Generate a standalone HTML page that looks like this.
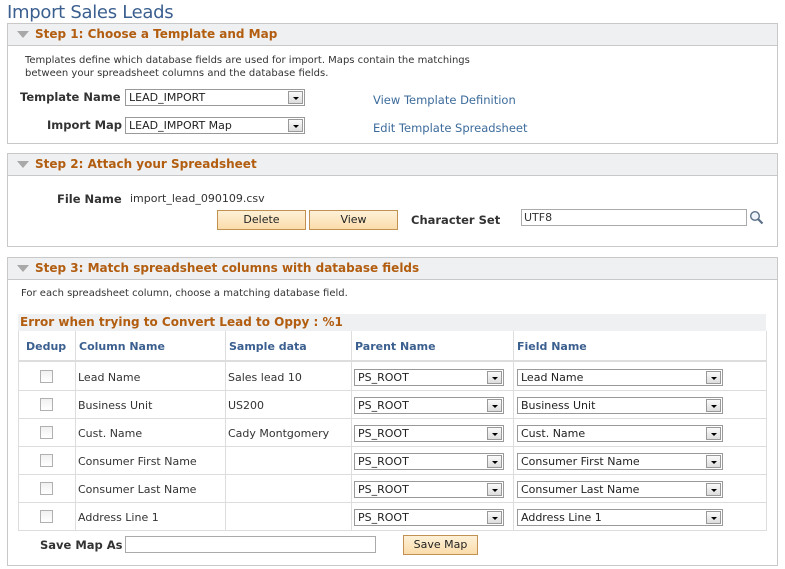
<!DOCTYPE html>
<html><head><meta charset="utf-8"><style>
*{box-sizing:border-box;margin:0;padding:0}
body{width:785px;height:569px;background:#fff;font-family:"DejaVu Sans","Liberation Sans",sans-serif;font-size:11px;color:#333;position:relative;overflow:hidden}
.a{position:absolute;white-space:nowrap}
.title{left:7px;top:2px;font-size:18px;color:#3b5f8f;font-family:"DejaVu Sans",sans-serif;letter-spacing:-0.3px}
.box{position:absolute;left:7px;width:771px;border:1px solid #c8c8c8}
.hd{height:22px;background:#eef0f2;border-bottom:1px solid #c8c8c8;position:relative}
.hd span{position:absolute;left:27px;top:3px;font-weight:bold;font-size:12px;color:#b25d0f}
.hd i{position:absolute;left:9px;top:7px;width:0;height:0;border-left:6px solid transparent;border-right:6px solid transparent;border-top:7px solid #a8a8a8}
.lbl{font-weight:bold;color:#333;font-size:11.5px}
.sel{position:absolute;height:17px;border:1px solid #999;background:#fff;font-size:11px;padding:1px 3px;color:#222}
.sel b{position:absolute;right:1px;top:1px;width:15px;height:13px;background:linear-gradient(#fafafa,#ddd);border:1px solid #999}
.sel b:after{content:"";position:absolute;left:4px;top:5px;border-left:3px solid transparent;border-right:3px solid transparent;border-top:3px solid #000}
.lnk{color:#3c6b9b;font-size:11.5px}
.btn{position:absolute;height:20px;background:linear-gradient(#fdf1d8,#fbdcaa);border:1px solid #c19152;text-align:center;line-height:18px;font-size:11px;color:#222}
.inp{position:absolute;height:17px;border:1px solid #aaa;background:#fff;padding:1px 2px;font-size:11px}
.vl{position:absolute;width:1px;background:#ddd}
.hl{position:absolute;height:1px;background:#ddd}
.cb{position:absolute;width:13px;height:13px;border:1px solid #b0b0b0;background:linear-gradient(#f0f0f0,#fff)}
.th{color:#3b5f8f;font-weight:bold;font-size:11px;top:340px}
.r{top:1px}
</style></head><body>
<div class="a title">Import Sales Leads</div>

<div class="box" style="top:23px;height:121px">
<div class="hd"><i></i><span>Step 1: Choose a Template and Map</span></div>
</div>
<div class="a" style="left:25px;top:54px;font-size:10px;line-height:13px">Templates define which database fields are used for import. Maps contain the matchings<br>between your spreadsheet columns and the database fields.</div>
<div class="a lbl" style="left:20px;top:90px">Template Name</div>
<div class="sel" style="left:125px;top:89px;width:180px">LEAD_IMPORT<b></b></div>
<div class="a lnk" style="left:373px;top:93px">View Template Definition</div>
<div class="a lbl" style="left:47px;top:118px">Import Map</div>
<div class="sel" style="left:125px;top:117px;width:180px">LEAD_IMPORT Map<b></b></div>
<div class="a lnk" style="left:373px;top:121px">Edit Template Spreadsheet</div>

<div class="box" style="top:153px;height:94px">
<div class="hd"><i></i><span>Step 2: Attach your Spreadsheet</span></div>
</div>
<div class="a lbl" style="left:57px;top:192px">File Name</div>
<div class="a" style="left:130px;top:192px">import_lead_090109.csv</div>
<div class="btn" style="left:217px;top:210px;width:89px">Delete</div>
<div class="btn" style="left:309px;top:210px;width:89px">View</div>
<div class="a lbl" style="left:411px;top:213px">Character Set</div>
<div class="inp" style="left:521px;top:209px;width:226px">UTF8</div>
<svg class="a" style="left:749px;top:210px" width="15" height="15" viewBox="0 0 15 15"><circle cx="6" cy="6" r="4.3" fill="#eef4fa" stroke="#5a6f86" stroke-width="1.4"/><line x1="9" y1="9" x2="13.5" y2="13.5" stroke="#5a6f86" stroke-width="2.2"/></svg>

<div class="box" style="top:257px;height:309px">
<div class="hd"><i></i><span>Step 3: Match spreadsheet columns with database fields</span></div>
</div>
<div class="a" style="left:21px;top:288px;font-size:10px">For each spreadsheet column, choose a matching database field.</div>

<div class="a" style="left:18px;top:314px;width:748px;height:17px;background:#eef0f2"></div>
<div class="a" style="left:20px;top:315px;font-weight:bold;font-size:12px;color:#b25d0f">Error when trying to Convert Lead to Oppy : %1</div>
<div class="hl" style="left:18px;top:360px;width:748px;height:2px"></div>
<div class="hl" style="left:18px;top:530px;width:748px"></div>
<div class="vl" style="left:18px;top:331px;height:200px"></div>
<div class="vl" style="left:75px;top:331px;height:200px"></div>
<div class="vl" style="left:225px;top:331px;height:200px"></div>
<div class="vl" style="left:351px;top:331px;height:200px"></div>
<div class="vl" style="left:513px;top:331px;height:200px"></div>
<div class="vl" style="left:766px;top:331px;height:200px"></div>
<div class="hl" style="left:18px;top:390px;width:748px"></div>
<div class="hl" style="left:18px;top:418px;width:748px"></div>
<div class="hl" style="left:18px;top:446px;width:748px"></div>
<div class="hl" style="left:18px;top:474px;width:748px"></div>
<div class="hl" style="left:18px;top:502px;width:748px"></div>
<div class="a th" style="left:26px">Dedup</div>
<div class="a th" style="left:79px">Column Name</div>
<div class="a th" style="left:229px">Sample data</div>
<div class="a th" style="left:355px">Parent Name</div>
<div class="a th" style="left:517px">Field Name</div>

<div class="cb" style="left:40px;top:370px"></div><div class="a" style="left:78px;top:371px">Lead Name</div><div class="a" style="left:228px;top:371px">Sales lead 10</div>
<div class="sel" style="left:354px;top:369px;width:150px">PS_ROOT<b></b></div><div class="sel" style="left:517px;top:369px;width:206px">Lead Name<b></b></div>
<div class="cb" style="left:40px;top:398px"></div><div class="a" style="left:78px;top:399px">Business Unit</div><div class="a" style="left:228px;top:399px">US200</div>
<div class="sel" style="left:354px;top:397px;width:150px">PS_ROOT<b></b></div><div class="sel" style="left:517px;top:397px;width:206px">Business Unit<b></b></div>
<div class="cb" style="left:40px;top:426px"></div><div class="a" style="left:78px;top:427px">Cust. Name</div><div class="a" style="left:228px;top:427px">Cady Montgomery</div>
<div class="sel" style="left:354px;top:425px;width:150px">PS_ROOT<b></b></div><div class="sel" style="left:517px;top:425px;width:206px">Cust. Name<b></b></div>
<div class="cb" style="left:40px;top:454px"></div><div class="a" style="left:78px;top:455px">Consumer First Name</div>
<div class="sel" style="left:354px;top:453px;width:150px">PS_ROOT<b></b></div><div class="sel" style="left:517px;top:453px;width:206px">Consumer First Name<b></b></div>
<div class="cb" style="left:40px;top:482px"></div><div class="a" style="left:78px;top:483px">Consumer Last Name</div>
<div class="sel" style="left:354px;top:481px;width:150px">PS_ROOT<b></b></div><div class="sel" style="left:517px;top:481px;width:206px">Consumer Last Name<b></b></div>
<div class="cb" style="left:40px;top:510px"></div><div class="a" style="left:78px;top:511px">Address Line 1</div>
<div class="sel" style="left:354px;top:509px;width:150px">PS_ROOT<b></b></div><div class="sel" style="left:517px;top:509px;width:206px">Address Line 1<b></b></div>

<div class="a lbl" style="left:40px;top:538px">Save Map As</div>
<div class="inp" style="left:125px;top:536px;width:251px"></div>
<div class="btn" style="left:403px;top:535px;width:75px">Save Map</div>
</body></html>
